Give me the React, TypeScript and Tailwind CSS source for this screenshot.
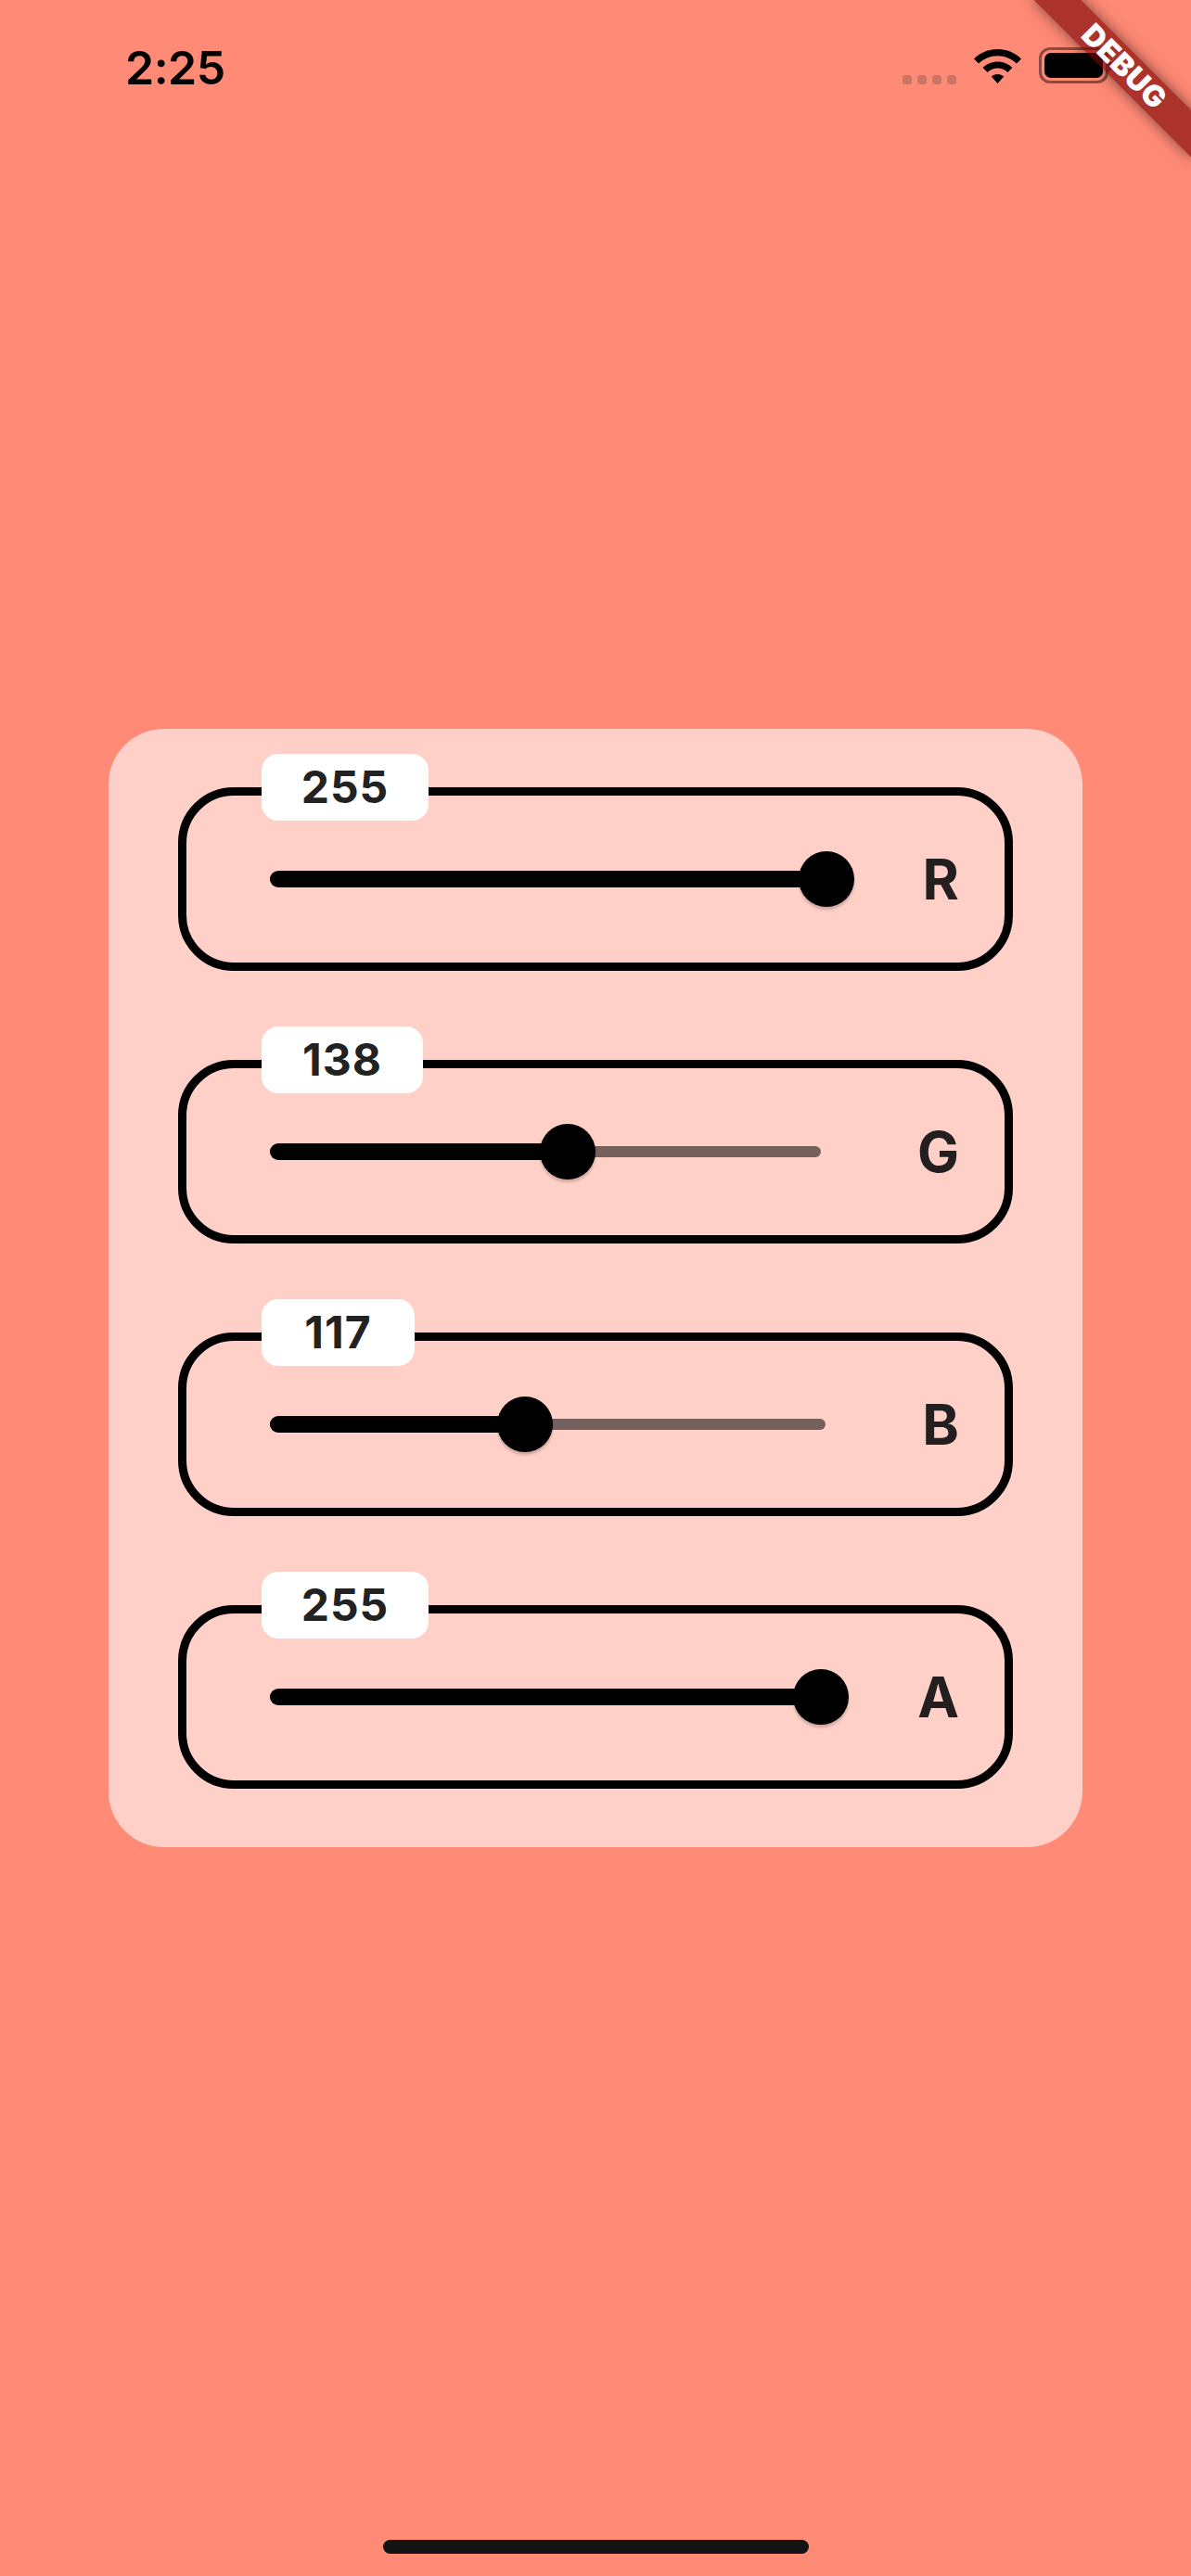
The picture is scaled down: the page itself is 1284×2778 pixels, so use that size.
const rows = [
  { label: "R", value: 255, badge: "w-[180px]" },
  { label: "G", value: 138, badge: "w-[174px]" },
  { label: "B", value: 117, badge: "w-[165px]" },
  { label: "A", value: 255, badge: "w-[180px]" },
];

function Row({ label, value, badge }: { label: string; value: number; badge: string }) {
  const pct = (value / 255) * 100;
  return (
    <div className="relative flex h-[198px] items-center rounded-[60px] border-[9px] border-black pl-[90px] pr-[49px]">
      <div
        className={`absolute left-[81px] top-[-45px] flex h-[72px] items-center justify-center rounded-[18px] bg-white text-[48px] font-bold tracking-[1px] text-[#222222] ${badge}`}
      >
        {value}
      </div>
      <div className="relative flex h-[60px] flex-1 items-center">
        <div className="h-[12px] w-full rounded-full bg-[#75605c]" />
        <div
          className="absolute left-0 top-[21px] h-[18px] rounded-l-full bg-black"
          style={{ width: `${pct}%` }}
        />
        <div
          className="absolute top-0 ml-[-30px] h-[60px] w-[60px] rounded-full bg-black shadow-[0_3px_3px_rgba(0,0,0,0.2)]"
          style={{ left: `${pct}%` }}
        />
      </div>
      <div className="ml-[104px] text-[60px] font-bold leading-none text-[#231f20]">{label}</div>
    </div>
  );
}

export default function App() {
  return (
    <div
      className="relative flex h-[2778px] w-[1284px] flex-col overflow-hidden bg-[#ff8a75] text-black"
      style={{ fontFamily: "Inter, sans-serif" }}
    >
      <div className="flex h-[786px] shrink-0 items-start justify-between pl-[135px] pr-[86px] pt-[42px]">
        <div className="text-[50px] font-semibold leading-[62px] tracking-[-0.5px]">2:25</div>
        <div className="flex items-start pt-[11px]">
          <div className="mr-[19px] mt-[28px] flex gap-[6px]">
            <div className="h-[10px] w-[10px] rounded-[3px] bg-[#cb7565]" />
            <div className="h-[10px] w-[10px] rounded-[3px] bg-[#cb7565]" />
            <div className="h-[10px] w-[10px] rounded-[3px] bg-[#cb7565]" />
            <div className="h-[10px] w-[10px] rounded-[3px] bg-[#cb7565]" />
          </div>
          <svg width="51" height="37" viewBox="0 0 51 37" className="mr-[19px]">
            <path d="M25.5 0C15.6 0 6.7 4 0 10.4L5 15.5C10.4 10.4 17.6 7.2 25.5 7.2S40.600 10.400 46 15.500L51 10.400C44.300 4 35.400 0 25.500 0Z" fill="#000" />
            <path d="M25.500 13.500C19.400 13.500 13.800 15.900 9.600 20L14.600 25C17.500 22.200 21.300 20.500 25.500 20.500S33.500 22.200 36.400 25L41.400 20C37.200 15.900 31.600 13.500 25.500 13.500Z" fill="#000" />
            <path d="M25.500 27C23 27 20.600 28 18.800 29.600L25.500 37L32.200 29.600C30.400 28 28 27 25.500 27Z" fill="#000" />
          </svg>
          <div className="mt-[-2px] h-[39px] w-[75px] rounded-[12px] border-[3px] border-[#8f4a3f] p-[3px]">
            <div className="h-full w-full rounded-[7px] bg-black" />
          </div>
          <div className="mt-[11px] h-[13px] w-[3px] rounded-r-[3px] bg-[#8f4a3f]" />
        </div>
      </div>

      <div className="mx-[117px] flex h-[1206px] shrink-0 flex-col gap-[96px] rounded-[60px] bg-[#ffd0c8] px-[75px] py-[63px]">
        {rows.map((r) => (
          <Row key={r.label} label={r.label} value={r.value} badge={r.badge} />
        ))}
      </div>

      <div className="mt-[747px] h-[15px] w-[459px] self-center rounded-full bg-[#141414]" />

      <div className="absolute left-[1092px] top-[54px] flex h-[36px] w-[240px] rotate-45 items-center justify-center bg-[#790000a0] text-[32px] font-black leading-none tracking-[0.5px] text-white shadow-[0_0_16px_rgba(0,0,0,0.5)]">
        DEBUG
      </div>
    </div>
  );
}
